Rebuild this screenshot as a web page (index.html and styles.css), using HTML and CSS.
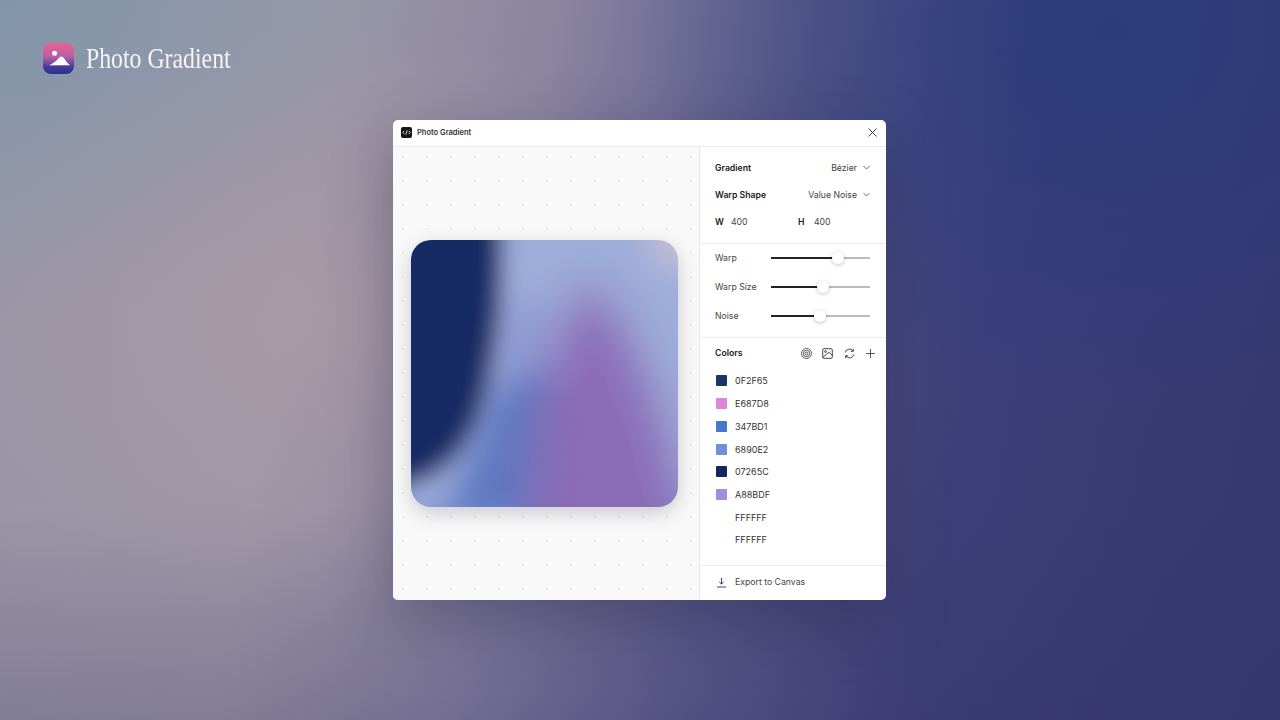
FILE: index.html
```html
<!DOCTYPE html>
<html lang="en">
<head>
    <meta charset="UTF-8">
    <title>Photo Gradient</title>
    <link rel="stylesheet" href="styles.css">
</head>
<body>
    <div class="page">
        <div class="brand">
            <svg class="brand-icon" width="31" height="31" viewBox="0 0 32 32">
                <defs>
                    <linearGradient id="brandFill" x1="0" y1="0" x2="0" y2="1">
                        <stop offset="0" stop-color="#ee5f8e"/>
                        <stop offset="0.45" stop-color="#b55ea6"/>
                        <stop offset="0.8" stop-color="#3d3a9a"/>
                        <stop offset="1" stop-color="#29358c"/>
                    </linearGradient>
                </defs>
                <rect width="32" height="32" rx="8" fill="url(#brandFill)"/>
                <circle cx="12" cy="10.500" r="2.600" fill="#fff"/>
                <path d="M6 23 C9 22 11 20 14 18 C15.500 16.500 17 14 19 14 C21 14 22.500 17 24 19 C25 20.500 27 22 28 23 Z" fill="#fff"/>
            </svg>
            <span class="brand-name">Photo Gradient</span>
        </div>

        <div class="window">
            <div class="titlebar">
                <svg class="app-icon" width="11" height="11" viewBox="0 0 11 11">
                    <rect width="11" height="11" rx="2" fill="#161616"/>
                    <path d="M3.200 3.900 L1.800 5.500 L3.200 7.100 M7.800 3.900 L9.200 5.500 L7.800 7.100 M6.200 3.400 L4.800 7.600" fill="none" stroke="#fff" stroke-width="0.800"/>
                </svg>
                <span class="title">Photo Gradient</span>
                <svg class="close" width="9" height="9" viewBox="0 0 9 9">
                    <path d="M0.500 0.500 L8.500 8.500 M8.500 0.500 L0.500 8.500" fill="none" stroke="#333" stroke-width="0.900"/>
                </svg>
            </div>

            <div class="content">
                <div class="preview">
                    <div class="canvas">
                        <svg width="267" height="267" viewBox="0 0 267 267">
                            <defs>
                                <filter id="blurWide" x="-60%" y="-60%" width="220%" height="220%">
                                    <feGaussianBlur stdDeviation="20"/>
                                </filter>
                                <filter id="blurBig" x="-60%" y="-60%" width="220%" height="220%">
                                    <feGaussianBlur stdDeviation="14"/>
                                </filter>
                                <filter id="blurAll" x="-30%" y="-30%" width="160%" height="160%">
                                    <feGaussianBlur stdDeviation="11"/>
                                </filter>
                            </defs>
                            <g filter="url(#blurAll)">
                                <rect x="-70" y="-70" width="407" height="407" fill="#9dadda"/>
                                <circle cx="272" cy="-4" r="36" fill="#c4bed4" filter="url(#blurBig)"/>
                                <path d="M96 60 L140 70 L125 200 L80 220 Z" fill="#8c9ad2" filter="url(#blurBig)"/>
                                <path d="M10 330 L55 225 L85 150 L135 130 L200 190 L210 330 Z" fill="#5d78c0" filter="url(#blurBig)"/>
                                <path d="M112 340 C118 230 122 120 178 40 C245 120 262 220 290 340 Z" fill="#8b6cb6" filter="url(#blurWide)"/>
                                <path d="M320 226 L320 330 L200 330 Z" fill="#7f72bc" filter="url(#blurBig)"/>
                                <path d="M-80 -80 L90 -80 C94 30 90 80 84 110 C78 150 68 188 48 212 C34 230 16 240 0 246 L-80 266 Z" fill="#132b64"/>
                                <path d="M-40 274 L110 270 L110 330 L-40 330 Z" fill="#6f88d6"/>
                            </g>
                        </svg>
                    </div>
                </div>

                <div class="panel">
                    <div class="section section-props">
                        <div class="row">
                            <span class="strong">Gradient</span>
                            <span class="select">Bézier
                                <svg width="7" height="5" viewBox="0 0 7 5"><path d="M0.500 1 L3.500 4 L6.500 1" fill="none" stroke="#444" stroke-width="0.800"/></svg>
                            </span>
                        </div>
                        <div class="row">
                            <span class="strong">Warp Shape</span>
                            <span class="select">Value Noise
                                <svg width="7" height="5" viewBox="0 0 7 5"><path d="M0.500 1 L3.500 4 L6.500 1" fill="none" stroke="#444" stroke-width="0.800"/></svg>
                            </span>
                        </div>
                        <div class="row size-row">
                            <span class="strong size-key">W</span>
                            <span class="size-val">400</span>
                            <span class="strong size-key">H</span>
                            <span class="size-val">400</span>
                        </div>
                    </div>

                    <div class="section section-sliders">
                        <div class="row">
                            <span class="slider-label">Warp</span>
                            <div class="slider"><div class="fill" style="width: 68%"></div><div class="thumb"></div><div class="rest"></div></div>
                        </div>
                        <div class="row">
                            <span class="slider-label">Warp Size</span>
                            <div class="slider"><div class="fill" style="width: 52.500%"></div><div class="thumb"></div><div class="rest"></div></div>
                        </div>
                        <div class="row">
                            <span class="slider-label">Noise</span>
                            <div class="slider"><div class="fill" style="width: 49%"></div><div class="thumb"></div><div class="rest"></div></div>
                        </div>
                    </div>

                    <div class="section section-colors">
                        <div class="colors-head">
                            <span class="strong">Colors</span>
                            <div class="tools">
                                <svg width="11" height="11" viewBox="0 0 11 11" fill="none" stroke="#333" stroke-width="0.800">
                                    <circle cx="5.500" cy="5.500" r="5"/><circle cx="5.500" cy="5.500" r="3.200"/><circle cx="5.500" cy="5.500" r="1.400"/>
                                </svg>
                                <svg width="11" height="11" viewBox="0 0 11 11" fill="none" stroke="#333" stroke-width="0.900">
                                    <rect x="0.700" y="0.700" width="9.600" height="9.600" rx="1.200"/>
                                    <circle cx="3.500" cy="3.500" r="0.900"/>
                                    <path d="M0.800 9.500 L6.800 4.200 L10.200 7.200"/>
                                </svg>
                                <svg width="11" height="11" viewBox="0 0 11 11" fill="none" stroke="#333" stroke-width="0.900">
                                    <path d="M1.200 4.500 A4.300 4.300 0 0 1 9 3 M9.800 6.500 A4.300 4.300 0 0 1 2 8"/>
                                    <path d="M9.300 0.800 V3.300 H6.800 M1.700 10.200 V7.700 H4.200"/>
                                </svg>
                                <svg width="11" height="11" viewBox="0 0 11 11" fill="none" stroke="#333" stroke-width="0.800">
                                    <path d="M5.500 1 V10 M1 5.500 H10"/>
                                </svg>
                            </div>
                        </div>
                        <div class="color-row"><span class="swatch c1"></span><span class="hex">0F2F65</span></div>
                        <div class="color-row"><span class="swatch c2"></span><span class="hex">E687D8</span></div>
                        <div class="color-row"><span class="swatch c3"></span><span class="hex">347BD1</span></div>
                        <div class="color-row"><span class="swatch c4"></span><span class="hex">6890E2</span></div>
                        <div class="color-row"><span class="swatch c5"></span><span class="hex">07265C</span></div>
                        <div class="color-row"><span class="swatch c6"></span><span class="hex">A88BDF</span></div>
                        <div class="color-row"><span class="swatch c7"></span><span class="hex">FFFFFF</span></div>
                        <div class="color-row"><span class="swatch c7"></span><span class="hex">FFFFFF</span></div>
                    </div>

                    <div class="export">
                        <svg width="11" height="11" viewBox="0 0 11 11" fill="none" stroke="#333" stroke-width="0.900">
                            <path d="M5.500 0.800 V7 M3.200 4.800 L5.500 7.100 L7.800 4.800 M1 10 H10"/>
                        </svg>
                        <span>Export to Canvas</span>
                    </div>
                </div>
            </div>
        </div>
    </div>
</body>
</html>
```

FILE: styles.css
```css
html, body {
    margin: 0;
    height: 100%;
}
body {
    font-family: Inter, "Noto Sans", sans-serif;
    color: #222;
    overflow: hidden;
}
.page {
    display: grid;
    width: 1280px;
    height: 720px;
    background-color: #7f7f9a;
    background-image:
        radial-gradient(380px 300px at 330px 320px, rgba(176, 155, 165, 0.6), rgba(176, 155, 165, 0) 100%),
        radial-gradient(460px 320px at 0px 0px, rgba(122, 150, 172, 0.75), rgba(122, 150, 172, 0) 100%),
        radial-gradient(480px 400px at 1110px 30px, rgba(38, 62, 124, 0.8), rgba(38, 62, 124, 0) 100%),
        linear-gradient(to top, rgba(52, 48, 104, 0.25), rgba(52, 48, 104, 0) 30%),
        linear-gradient(100deg, #9a96a6 0%, #9d97a6 24%, #8a84a0 40%, #5c5a8c 58%, #3d3e79 74%, #36376f 100%);
}
.brand, .window {
    grid-area: 1 / 1;
}
.brand {
    display: flex;
    align-items: center;
    gap: 12px;
    align-self: start;
    justify-self: start;
    margin: 43px 0 0 43px;
}
.brand-icon {
    display: block;
}
.brand-name {
    font-family: "Liberation Serif", serif;
    font-size: 29px;
    line-height: 31px;
    color: #f4f4f7;
    transform: scaleX(0.82);
    transform-origin: left center;
}
.window {
    place-self: center;
    margin-right: 1px;
    width: 493px;
    height: 480px;
    background: #fff;
    border-radius: 5px;
    box-shadow: 0 20px 60px rgba(30, 30, 60, 0.35);
    display: flex;
    flex-direction: column;
    overflow: hidden;
}
.titlebar {
    display: flex;
    align-items: center;
    height: 25px;
    padding: 0 9px 1px 8px;
    border-bottom: 1px solid #ececec;
    flex: none;
}
.app-icon {
    margin-right: 5px;
}
.title {
    font-size: 7.500px;
    font-weight: 600;
    color: #333;
}
.close {
    margin-left: auto;
}
.content {
    display: flex;
    flex: 1;
    min-height: 0;
}
.preview {
    width: 307px;
    flex: none;
    display: flex;
    align-items: center;
    justify-content: center;
    padding-right: 3px;
    box-sizing: border-box;
    background-color: #f9f9f9;
    background-image: radial-gradient(circle, #e8e8e8 0.8px, rgba(232, 232, 232, 0) 1.2px);
    background-size: 24px 24px;
    background-position: -2px -2px;
    border-right: 1px solid #e8e8e8;
}
.canvas {
    width: 267px;
    height: 267px;
    border-radius: 20px;
    overflow: hidden;
    box-shadow: 0 6px 20px rgba(40, 40, 70, 0.22);
}
.canvas svg {
    display: block;
}
.panel {
    flex: 1;
    display: flex;
    flex-direction: column;
    min-width: 0;
    font-size: 8.700px;
}
.section {
    padding: 0 16px 0 15px;
    border-bottom: 1px solid #ececec;
}
.section-props {
    padding-top: 7px;
    padding-bottom: 8px;
}
.section-sliders {
    padding-bottom: 7px;
}
.section-sliders .row:first-child {
    margin-top: -1px;
}
.section-props .row {
    height: 27px;
}
.section-sliders .row {
    height: 29px;
}
.row {
    display: flex;
    align-items: center;
    justify-content: space-between;
}
.strong {
    font-weight: 600;
    color: #222;
}
.select {
    display: flex;
    align-items: center;
    gap: 6px;
    color: #444;
}
.size-row {
    justify-content: flex-start;
}
.size-key {
    width: 16px;
    flex: none;
}
.size-val {
    width: 67px;
    flex: none;
    color: #444;
}
.slider-label {
    width: 56px;
    color: #444;
    flex: none;
}
.slider {
    flex: 1;
    display: flex;
    align-items: center;
    height: 14px;
}
.fill {
    height: 2px;
    background: #222;
}
.rest {
    flex: 1;
    height: 2px;
    background: #bbb;
}
.thumb {
    width: 12px;
    height: 12px;
    margin: 0 -6px;
    border-radius: 50%;
    background: #fff;
    box-shadow: 0 1px 4px rgba(0, 0, 0, 0.25);
    position: relative;
    flex: none;
}
.section-colors {
    flex: 1;
}
.colors-head {
    display: flex;
    align-items: center;
    justify-content: space-between;
    height: 30px;
    margin-bottom: 1.600px;
    margin-right: -6px;
}
.tools {
    display: flex;
    gap: 10.500px;
}
.color-row {
    display: flex;
    align-items: center;
    height: 22.700px;
}
.swatch {
    width: 11px;
    height: 11px;
    margin: 0 8px 0 1px;
    border-radius: 1px;
}
.hex {
    color: #333;
    font-size: 9px;
}
.c1 { background: #1d3468; }
.c2 { background: #dd88d6; }
.c3 { background: #4478c8; }
.c4 { background: #6d8fdc; }
.c5 { background: #13265e; }
.c6 { background: #a48cdc; }
.c7 { background: #fff; }
.export {
    display: flex;
    align-items: center;
    gap: 8px;
    height: 32px;
    padding: 0 17px 2px 16px;
    color: #444;
    flex: none;
}
```
